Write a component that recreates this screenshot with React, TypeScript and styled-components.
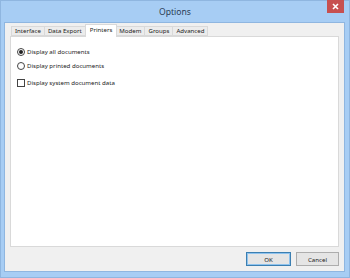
import React, { useState } from "react";
import styled, { createGlobalStyle } from "styled-components";

const Global = createGlobalStyle`
  html, body { margin: 0; padding: 0; }
  body { width: 350px; height: 278px; overflow: hidden; font-family: "Noto Sans", "Open Sans", sans-serif; }
`;

const Frame = styled.div`
  width: 350px;
  height: 278px;
  box-sizing: border-box;
  background: #a7cdf4;
  border: 1px solid #8fb6e0;
  display: flex;
  flex-direction: column;
`;

const TitleBar = styled.div`
  height: 21px;
  position: relative;
  display: flex;
  align-items: center;
  justify-content: center;
  font-size: 8.6px;
  color: #2b3d55;
`;

const CloseBtn = styled.div`
  position: absolute;
  top: -1px;
  right: 5px;
  width: 17px;
  height: 13px;
  background: #c75050;
  display: flex;
  align-items: center;
  justify-content: center;
`;

const Client = styled.div`
  flex: 1;
  margin: 0 4px 5px 3px;
  background: #f0f0f0;
  border: 1px solid #8fb6e0;
  display: flex;
  flex-direction: column;
  padding: 1px 5px 0 5px;
`;

const TabRow = styled.div`
  display: flex;
  align-items: flex-end;
  height: 12px;
  padding-left: 1px;
  position: relative;
  z-index: 1;
`;

const Tab = styled.div<{ $active?: boolean }>`
  box-sizing: border-box;
  height: ${(p) => (p.$active ? 13 : 10)}px;
  margin-bottom: ${(p) => (p.$active ? -1 : 0)}px;
  padding: 0 ${(p) => (p.$active ? 4 : 3)}px;
  margin-left: ${(p) => (p.$active ? -1 : 0)}px;
  margin-right: ${(p) => (p.$active ? -1 : 0)}px;
  border: 1px solid #d9d9d9;
  border-bottom: ${(p) => (p.$active ? "none" : "1px solid #d9d9d9")};
  border-left: ${(p) => (p.$active ? "1px solid #d9d9d9" : "none")};
  background: ${(p) => (p.$active ? "#ffffff" : "#ececec")};
  font-size: 6.1px;
  line-height: ${(p) => (p.$active ? 10 : 8)}px;
  color: #1a1a1a;
  white-space: nowrap;
  position: relative;
  z-index: ${(p) => (p.$active ? 2 : 1)};
  &:first-child { border-left: 1px solid #d9d9d9; }
`;

const Panel = styled.div`
  height: 211px;
  background: #ffffff;
  border: 1px solid #d9d9d9;
  box-sizing: border-box;
  padding: 10px 0 0 6px;
  display: flex;
  flex-direction: column;
`;

const Option = styled.div<{ $gap?: number }>`
  display: flex;
  align-items: center;
  gap: 2px;
  height: 9px;
  margin-bottom: ${(p) => p.$gap ?? 5}px;
  font-size: 6.1px;
  color: #1a1a1a;
  white-space: nowrap;
`;

const Radio = styled.span<{ $on?: boolean }>`
  width: 8px;
  height: 8px;
  box-sizing: border-box;
  border-radius: 50%;
  border: 1px solid #444;
  background: #fff;
  display: inline-flex;
  align-items: center;
  justify-content: center;
  &::after {
    content: "";
    width: 4px;
    height: 4px;
    border-radius: 50%;
    background: ${(p) => (p.$on ? "#222" : "transparent")};
  }
`;

const Check = styled.span`
  width: 8px;
  height: 8px;
  box-sizing: border-box;
  border: 1px solid #444;
  background: #fff;
  display: inline-block;
`;

const Footer = styled.div`
  flex: 1;
  display: flex;
  justify-content: flex-end;
  align-items: flex-start;
  gap: 5px;
  padding-top: 5px;
`;

const Button = styled.div<{ $default?: boolean }>`
  width: ${(p) => (p.$default ? 45 : 43)}px;
  height: 14px;
  box-sizing: border-box;
  border: 1px solid ${(p) => (p.$default ? "#3c7fb1" : "#adadad")};
  box-shadow: ${(p) => (p.$default ? "inset 0 0 0 1px #8fc3ee" : "none")};
  background: #e5e5e5;
  font-size: 6.1px;
  color: #1a1a1a;
  display: flex;
  align-items: center;
  justify-content: center;
`;

export default function App() {
  const [sel, setSel] = useState(0);
  return (
    <>
      <Global />
      <Frame>
        <TitleBar>
          Options
          <CloseBtn>
            <svg width="7" height="7" viewBox="0 0 7 7">
              <path d="M1 1L6 6M6 1L1 6" stroke="#fff" strokeWidth="1.6" />
            </svg>
          </CloseBtn>
        </TitleBar>
        <Client>
          <TabRow>
            <Tab>Interface</Tab>
            <Tab>Data Export</Tab>
            <Tab $active>Printers</Tab>
            <Tab>Modem</Tab>
            <Tab>Groups</Tab>
            <Tab>Advanced</Tab>
          </TabRow>
          <Panel>
            <Option onClick={() => setSel(0)}>
              <Radio $on={sel === 0} />
              Display all documents
            </Option>
            <Option $gap={8} onClick={() => setSel(1)}>
              <Radio $on={sel === 1} />
              Display printed documents
            </Option>
            <Option>
              <Check />
              Display system document data
            </Option>
          </Panel>
          <Footer>
            <Button $default>OK</Button>
            <Button>Cancel</Button>
          </Footer>
        </Client>
      </Frame>
    </>
  );
}
